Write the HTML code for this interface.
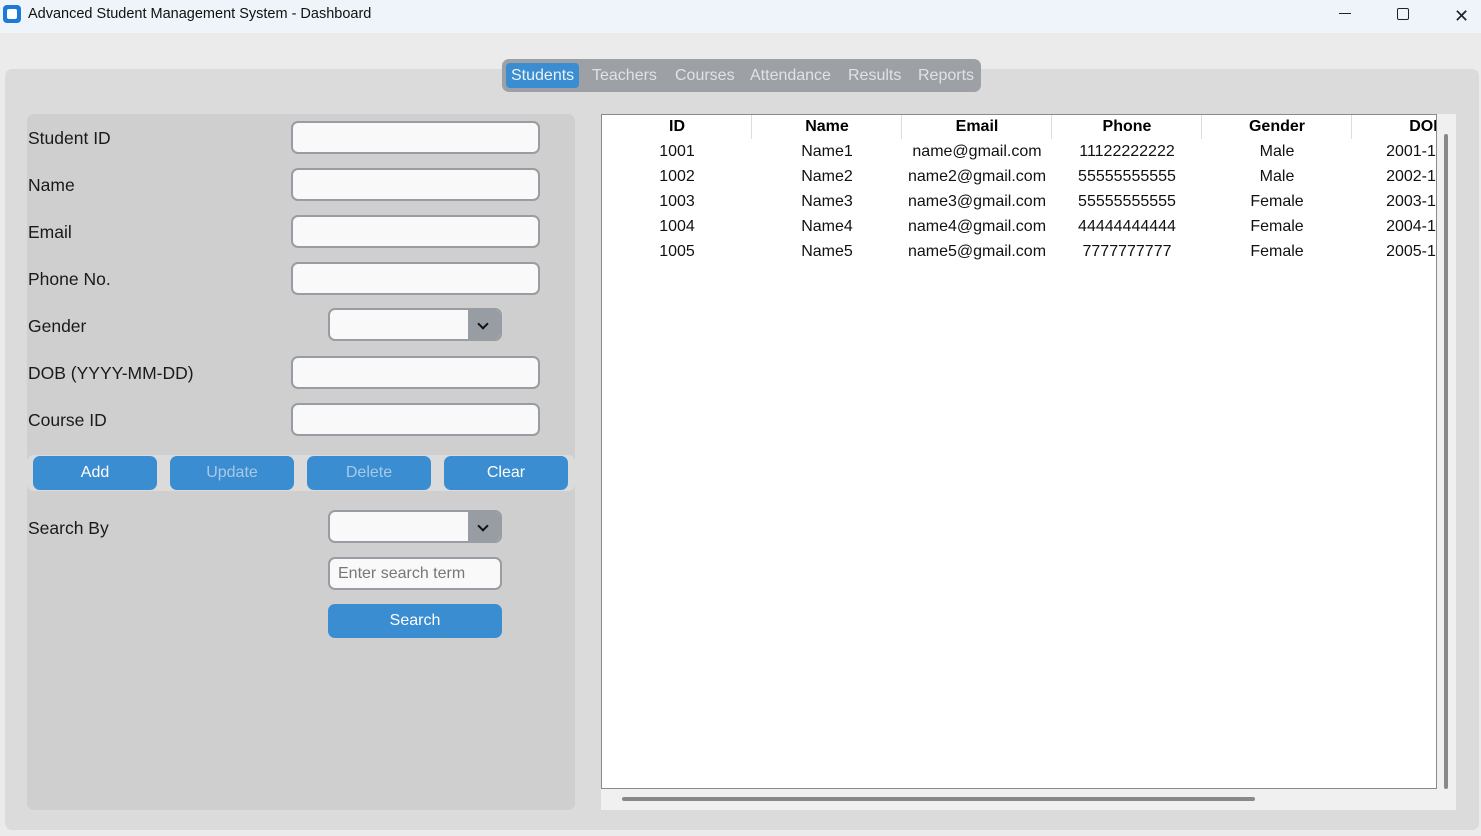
<!DOCTYPE html>
<html><head><style>
*{margin:0;padding:0;box-sizing:border-box}
body{width:1481px;height:836px;background:#ebebeb;font-family:"Liberation Sans",sans-serif;position:relative;overflow:hidden}
.a{position:absolute}
.lbl{position:absolute;left:28px;font-size:17.5px;color:#1a1a1a}
.ent{position:absolute;left:291px;width:249px;height:33px;background:#f9f9f9;border:2px solid #979da2;border-radius:7px}
.cmb{position:absolute;left:328px;width:174px;height:33px;background:#f9f9f9;border:2px solid #979da2;border-radius:7px;overflow:hidden}
.cmb i{position:absolute;right:0;top:0;width:32px;height:100%;background:#979da2}
.cmb i:after{content:"";position:absolute;left:11px;top:10px;width:6px;height:6px;border-right:2px solid #111;border-bottom:2px solid #111;transform:rotate(45deg)}
.btn{position:absolute;top:456px;width:124px;height:34px;background:#3a8dd0;border-radius:7px;color:#fff;font-size:16px;text-align:center;line-height:34px}
.tab{position:absolute;top:63px;height:25px;line-height:25px;font-size:16px;color:#dfe3e8}
.th{position:absolute;top:118px;font-size:16px;font-weight:bold;text-align:center;width:150px}
.td{position:absolute;font-size:16px;text-align:center;width:150px;color:#111}
</style></head><body>
<div class="a" style="left:0;top:0;width:1481px;height:33px;background:#eef4f9"></div>
<div class="a" style="left:3px;top:5px;width:18px;height:18px;background:#1e7ad8;border-radius:4px"></div>
<div class="a" style="left:7px;top:9px;width:10px;height:10px;background:#fff;border-radius:2px"></div>
<div class="a" style="left:28px;top:6px;font-size:14.5px;color:#111">Advanced Student Management System - Dashboard</div>
<div class="a" style="left:1339px;top:13px;width:12px;height:1px;background:#222"></div>
<div class="a" style="left:1397px;top:8px;width:12px;height:12px;border:1.3px solid #222;border-radius:2px"></div>
<div class="a" style="left:1454px;top:6px;font-size:18px;color:#222">✕</div>

<div class="a" style="left:5px;top:69px;width:1474px;height:761px;background:#dbdbdb;border-radius:7px"></div>
<div class="a" style="left:502px;top:59px;width:479px;height:33px;background:#9da0a4;border-radius:7px"></div>
<div class="a" style="left:506px;top:63px;width:73px;height:25px;background:#3a8dd0;border-radius:4px"></div>
<div class="tab" style="left:511px;color:#eaf2fa">Students</div>
<div class="tab" style="left:592px">Teachers</div>
<div class="tab" style="left:675px">Courses</div>
<div class="tab" style="left:750px">Attendance</div>
<div class="tab" style="left:848px">Results</div>
<div class="tab" style="left:918px">Reports</div>

<div class="a" style="left:27px;top:114px;width:548px;height:696px;background:#cfcfcf;border-radius:7px"></div>
<div class="lbl" style="top:128px">Student ID</div><div class="ent" style="top:121px"></div>
<div class="lbl" style="top:175px">Name</div><div class="ent" style="top:168px"></div>
<div class="lbl" style="top:222px">Email</div><div class="ent" style="top:215px"></div>
<div class="lbl" style="top:269px">Phone No.</div><div class="ent" style="top:262px"></div>
<div class="lbl" style="top:316px">Gender</div><div class="cmb" style="top:308px"><i></i></div>
<div class="lbl" style="top:363px">DOB (YYYY-MM-DD)</div><div class="ent" style="top:356px"></div>
<div class="lbl" style="top:410px">Course ID</div><div class="ent" style="top:403px"></div>
<div class="a" style="left:27px;top:455px;width:548px;height:36px;background:#dbdbdb;border-radius:7px"></div>
<div class="btn" style="left:33px">Add</div>
<div class="btn" style="left:170px;color:#a9c8e6">Update</div>
<div class="btn" style="left:307px;color:#a9c8e6">Delete</div>
<div class="btn" style="left:444px">Clear</div>
<div class="lbl" style="top:518px">Search By</div><div class="cmb" style="top:510px"><i></i></div>
<div class="cmb" style="top:557px;padding:6px 0 0 8px;font-size:16px;color:#777">Enter search term</div>
<div class="a" style="left:328px;top:604px;width:174px;height:34px;background:#3a8dd0;border-radius:7px;color:#fff;font-size:16px;text-align:center;line-height:34px">Search</div>

<div class="a" style="left:601px;top:114px;width:855px;height:696px;background:#f0f0f0"></div>
<div class="a" style="left:601px;top:114px;width:836px;height:675px;background:#fff;border:1px solid #8a8a8a;overflow:hidden">
</div>
<div class="a" style="left:1444px;top:134px;width:4px;height:655px;background:#888;border-radius:2px"></div>
<div class="a" style="left:622px;top:797px;width:633px;height:4px;background:#888;border-radius:2px"></div>
<div class="a" style="left:602px;top:115px;width:834px;height:673px;overflow:hidden">
<div class="a" style="left:149px;top:0;width:1px;height:24px;background:#ddd"></div>
<div class="a" style="left:299px;top:0;width:1px;height:24px;background:#ddd"></div>
<div class="a" style="left:449px;top:0;width:1px;height:24px;background:#ddd"></div>
<div class="a" style="left:599px;top:0;width:1px;height:24px;background:#ddd"></div>
<div class="a" style="left:749px;top:0;width:1px;height:24px;background:#ddd"></div>
<div class="th" style="left:0;top:3px">ID</div><div class="th" style="left:150px;top:3px">Name</div><div class="th" style="left:300px;top:3px">Email</div><div class="th" style="left:450px;top:3px">Phone</div><div class="th" style="left:600px;top:3px">Gender</div><div class="th" style="left:750px;top:3px">DOB</div>
<div class="td" style="left:0;top:28px">1001</div><div class="td" style="left:150px;top:28px">Name1</div><div class="td" style="left:300px;top:28px">name@gmail.com</div><div class="td" style="left:450px;top:28px">11122222222</div><div class="td" style="left:600px;top:28px">Male</div><div class="td" style="left:750px;top:28px">2001-10-10</div>
<div class="td" style="left:0;top:53px">1002</div><div class="td" style="left:150px;top:53px">Name2</div><div class="td" style="left:300px;top:53px">name2@gmail.com</div><div class="td" style="left:450px;top:53px">55555555555</div><div class="td" style="left:600px;top:53px">Male</div><div class="td" style="left:750px;top:53px">2002-10-10</div>
<div class="td" style="left:0;top:78px">1003</div><div class="td" style="left:150px;top:78px">Name3</div><div class="td" style="left:300px;top:78px">name3@gmail.com</div><div class="td" style="left:450px;top:78px">55555555555</div><div class="td" style="left:600px;top:78px">Female</div><div class="td" style="left:750px;top:78px">2003-10-10</div>
<div class="td" style="left:0;top:103px">1004</div><div class="td" style="left:150px;top:103px">Name4</div><div class="td" style="left:300px;top:103px">name4@gmail.com</div><div class="td" style="left:450px;top:103px">44444444444</div><div class="td" style="left:600px;top:103px">Female</div><div class="td" style="left:750px;top:103px">2004-10-10</div>
<div class="td" style="left:0;top:128px">1005</div><div class="td" style="left:150px;top:128px">Name5</div><div class="td" style="left:300px;top:128px">name5@gmail.com</div><div class="td" style="left:450px;top:128px">7777777777</div><div class="td" style="left:600px;top:128px">Female</div><div class="td" style="left:750px;top:128px">2005-10-10</div>
</div>
</body></html>
